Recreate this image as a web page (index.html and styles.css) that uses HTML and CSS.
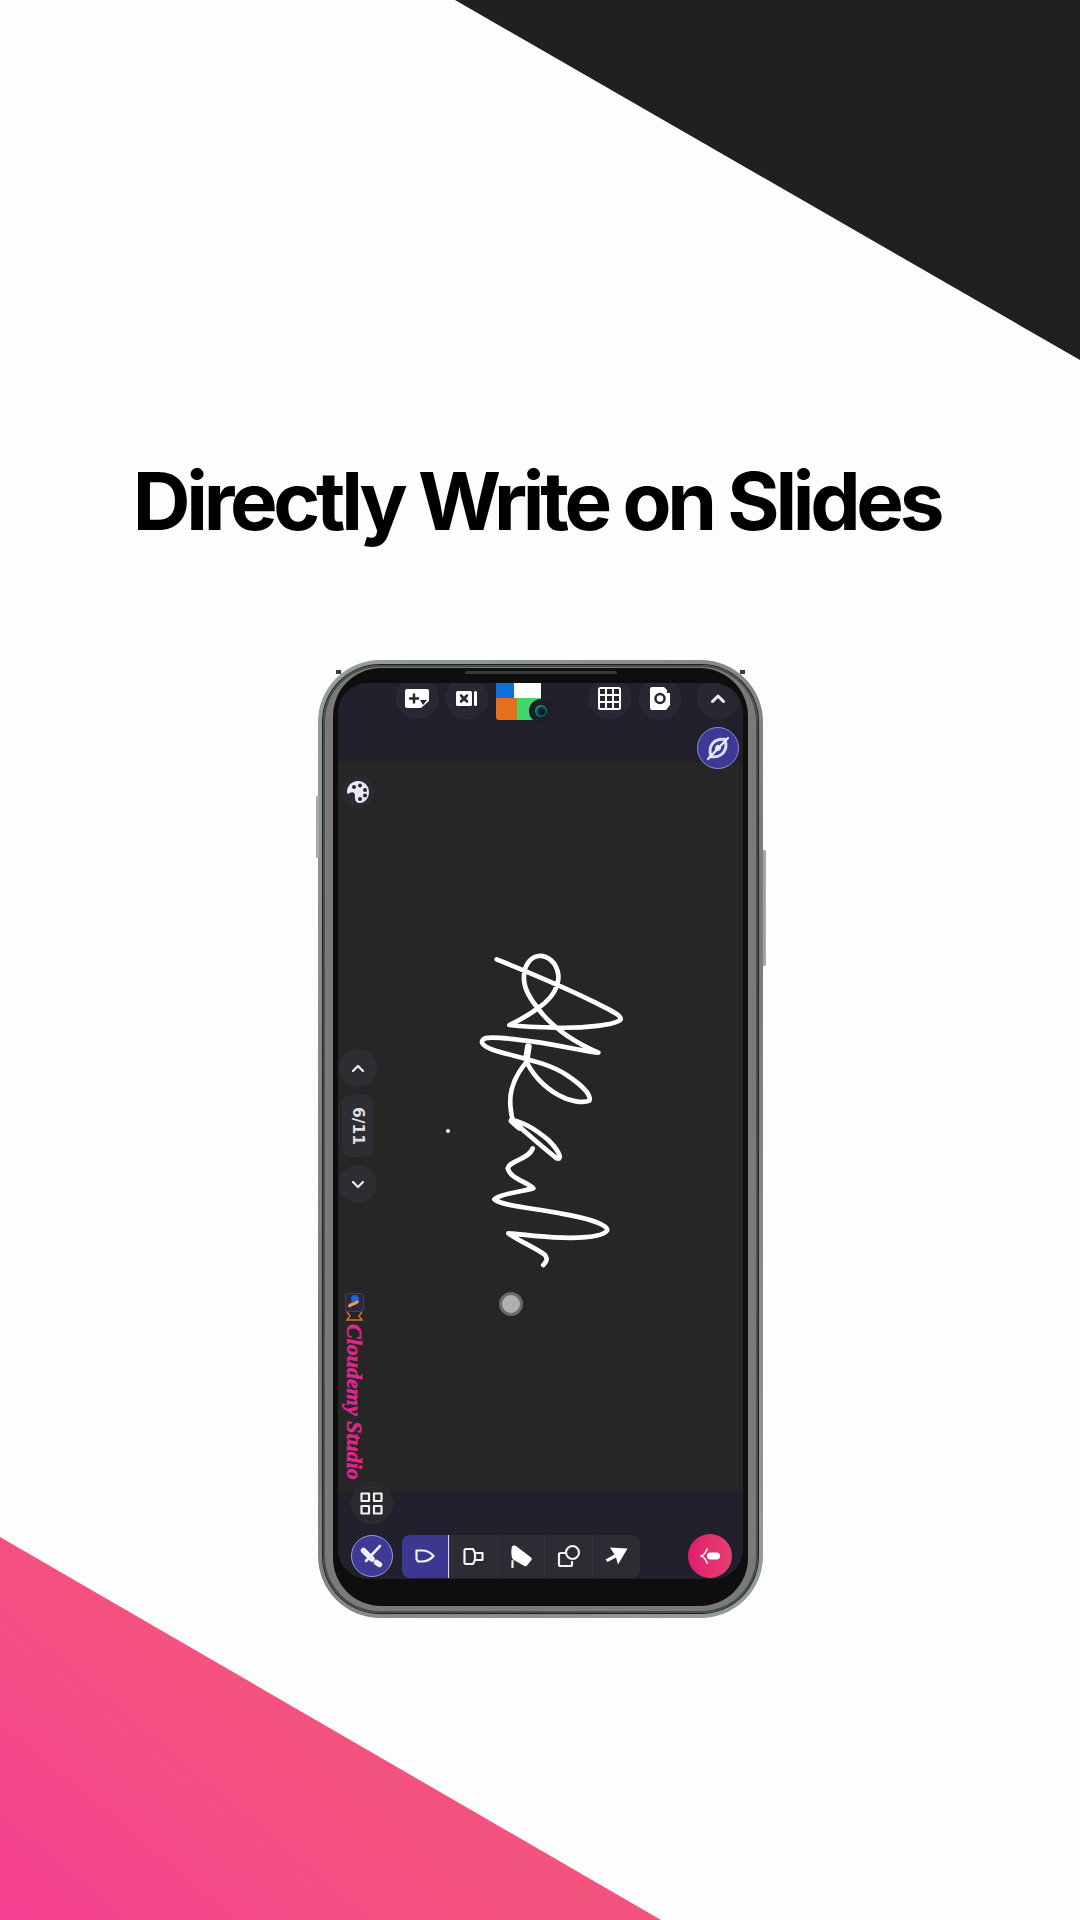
FILE: index.html
```html
<!DOCTYPE html>
<html lang="en">
<head>
<meta charset="utf-8">
<title>Directly Write on Slides</title>
<link rel="stylesheet" href="styles.css">
</head>
<body>
<div class="page">
  <div class="wedge wedge-top"></div>
  <div class="wedge wedge-bottom"></div>
  <h1 class="headline">Directly Write on Slides</h1>

  <div class="phone">
    <span class="ear ear-left"></span>
    <span class="ear ear-right"></span>
    <span class="side-btn side-btn-power"></span>
    <span class="side-btn side-btn-volume"></span>
    <div class="rim-dark">
      <div class="rim-metal">
        <div class="bezel">
          <span class="speaker"></span>
          <div class="screen">
            <header class="topbar">
              <div class="topbar-row">
                <div class="round">
                  <svg width="24" height="19" viewBox="0 0 24 19"><path class="fill-white" d="M2 0H22a2 2 0 0 1 2 2V12L16 19H2a2 2 0 0 1-2-2V2a2 2 0 0 1 2-2z"/><path class="stroke-dark" d="M5 9.500H13M9 5.500V13.500"/><path class="fill-dark" d="M15 11H22L18 16z"/></svg>
                </div>
                <div class="round">
                  <svg width="22" height="15" viewBox="0 0 22 15"><rect class="fill-white" x="0" y="0" width="16" height="15" rx="1.500"/><rect class="fill-white" x="18" y="0" width="3" height="15" rx="1.500"/><path class="stroke-dark" d="M5 4.500L11 10.500M11 4.500L5 10.500"/></svg>
                </div>
                <div class="swatch">
                  <span class="swatch-cell swatch-blue"></span>
                  <span class="swatch-cell swatch-white"></span>
                  <span class="swatch-cell swatch-orange"></span>
                  <span class="swatch-cell swatch-green"></span>
                  <span class="camera"><span class="camera-lens"></span></span>
                </div>
                <div class="round round-grid">
                  <svg width="23" height="23" viewBox="0 0 23 23"><rect class="fill-white" width="23" height="23" rx="2.500"/><path class="fill-dark" d="M2 2h5v5H2zM9 2h5v5H9zM16 2h5v5h-5zM2 9h5v5H2zM9 9h5v5H9zM16 9h5v5h-5zM2 16h5v5H2zM9 16h5v5H9zM16 16h5v5h-5z"/></svg>
                </div>
                <div class="round">
                  <svg width="20" height="23" viewBox="0 0 20 23"><path class="fill-white" d="M2 0H14L17 3V6H20V18L16 23H2a2 2 0 0 1-2-2V2a2 2 0 0 1 2-2z"/><circle cx="10" cy="11.500" r="4.500" class="ring-dark"/></svg>
                </div>
                <div class="round round-end">
                  <svg width="14" height="9" viewBox="0 0 14 9"><path class="stroke-white" d="M1.500 7.500L7 2L12.500 7.500"/></svg>
                </div>
              </div>
              <div class="eye-btn">
                <svg width="28" height="28" viewBox="0 0 28 28"><g transform="rotate(-52 14 14)"><path class="eye-line" d="M3 14C6 9 10 7 14 7s8 2 11 7c-3 5-7 7-11 7S6 19 3 14z"/><circle cx="14" cy="14" r="3" class="eye-pupil"/></g><path class="eye-slash" d="M4 25L24 4"/></svg>
              </div>
            </header>

            <main class="canvas">
              <svg class="signature" width="180" height="360" viewBox="0 0 540 1080">
                <path class="ink" d="M110 88C200 125 300 165 400 215C450 240 485 255 482 268C470 285 370 295 290 293C240 292 190 290 148 285C180 270 215 250 240 230C275 205 298 170 295 135C290 95 260 75 235 78C205 82 190 115 192 150C195 190 225 225 250 255C290 300 350 340 415 368C370 365 300 345 220 335C170 328 100 318 75 325C55 335 70 350 100 360C170 382 260 395 320 435C365 465 395 495 388 512C370 520 330 515 295 495C250 470 215 430 200 395C170 430 145 480 152 535C153 550 155 560 160 575C190 600 245 650 290 685C310 690 295 660 265 630C235 605 190 575 155 570"/>
                <path class="ink" d="M218 655C205 690 150 690 143 715C150 745 200 755 220 775C190 785 120 790 103 808C130 830 230 835 300 850C370 862 440 880 442 900C430 925 340 925 280 922C230 920 180 912 145 910C180 935 230 955 255 975C265 990 258 995 250 1005"/>
                <path class="ink ink-blob" d="M205 350L200 382"/>
                <path class="ink ink-blob" d="M156 572L178 592"/>
              </svg>
              <span class="ink-dot"></span>
              <span class="touch-dot"></span>

              <aside class="rail">
                <div class="palette">
                  <svg width="24" height="24" viewBox="0 0 24 24"><path class="fill-soft" d="M12 1C5.500 1 1 6 1 12c0 1.500 1 2 2 1.500C5 12.500 7 11.500 8.500 13.500c1 1.500 0 3 .5 5C9.500 21.500 11 23 13.500 23 19 23 23 18 23 12S18.500 1 12 1z"/><circle class="fill-dark" cx="8" cy="7" r="2"/><circle class="fill-dark" cx="14" cy="5.500" r="2"/><circle class="fill-dark" cx="19" cy="10" r="2"/><circle class="fill-dark" cx="19" cy="15.500" r="2"/><circle class="fill-dark" cx="14" cy="19" r="2"/></svg>
                </div>
                <div class="pager">
                  <div class="pager-btn"><svg width="14" height="9" viewBox="0 0 14 9"><path class="stroke-white-thin" d="M2 7L7 2L12 7"/></svg></div>
                  <div class="pager-count">6/11</div>
                  <div class="pager-btn"><svg width="14" height="9" viewBox="0 0 14 9"><path class="stroke-white-thin" d="M2 2L7 7L12 2"/></svg></div>
                </div>
                <div class="brand">
                  <svg width="19" height="28" viewBox="0 0 19 28"><rect class="logo-box" x="0.500" y="0.500" width="18" height="18" rx="2"/><circle cx="10" cy="6" r="4" class="logo-blue"/><path class="logo-stroke" d="M4 14C6 9 10 13 13 8"/><path class="logo-stand" d="M2 19L5 23L2 27H17L14 23L17 19"/></svg>
                  <div class="brand-name">Cloudemy Studio</div>
                </div>
              </aside>
            </main>

            <footer class="bottombar">
              <div class="round round-apps">
                <svg width="23" height="23" viewBox="0 0 23 23"><path class="outline-white" d="M1.500 1.500H9V9H1.500zM14 1.500H21.500V9H14zM1.500 14H9V21.500H1.500zM14 14H21.500V21.500H14z"/></svg>
              </div>
              <div class="tools-row">
                <div class="tool-toggle">
                  <svg width="24" height="24" viewBox="0 0 24 24"><path class="stroke-white-mid" d="M20 2L6 17"/><path class="stroke-white-wide" d="M3.500 6.500L12 15"/><path class="stroke-white-wide" d="M16.500 18.500L19.500 20.500"/></svg>
                </div>
                <div class="toolbar">
                  <div class="tool tool-active">
                    <svg width="20" height="14" viewBox="0 0 20 14"><path class="outline-white" d="M1.500 1.500H7C12 1.500 16 4 18.500 7C16 10 12 12.500 7 12.500H3L1.500 10z"/></svg>
                  </div>
                  <div class="tool">
                    <svg width="21" height="17" viewBox="0 0 21 17"><path class="outline-white" d="M3 1H10L12 5H19.500V12H12L10 16H3a1.500 1.500 0 0 1-1.500-1.500V2.500A1.500 1.500 0 0 1 3 1z"/><path class="outline-white" d="M12 5V12"/></svg>
                  </div>
                  <div class="tool">
                    <svg width="22" height="23" viewBox="0 0 22 23"><path class="fill-white" d="M2 1.500C3 .5 5 0 6 1L21 12.500C22 13.500 22 14.500 21 15.500L17 20.500C16 21.500 14.500 21.500 13.500 20.500L3 14.500C1 12 1 5 2 1.500z"/><path class="stroke-white-thin" d="M2.500 16V23"/></svg>
                  </div>
                  <div class="tool">
                    <svg width="24" height="24" viewBox="0 0 24 24"><path class="outline-white" d="M8 9H3.500A1.500 1.500 0 0 0 2 10.500V20.500A1.500 1.500 0 0 0 3.500 22H13.500A1.500 1.500 0 0 0 15 20.500V17"/><circle class="outline-white" cx="15.500" cy="8.500" r="6.500"/></svg>
                  </div>
                  <div class="tool">
                    <svg width="23" height="18" viewBox="0 0 23 18"><path class="fill-white" d="M5 0.500L22.500 1.500L13 17.500L11 10.500L2.500 15L0.500 12.500L9.500 7.500z"/></svg>
                  </div>
                </div>
                <div class="record">
                  <svg width="20" height="16" viewBox="0 0 20 16"><rect class="fill-white" x="7" y="4.500" width="13" height="7" rx="3.500"/><path class="stroke-white-hair" d="M7 1C6 4 5 7 1 8C5 9 6 12 7 15"/></svg>
                </div>
              </div>
            </footer>
          </div>
        </div>
      </div>
    </div>
  </div>
</div>
</body>
</html>
```
FILE: styles.css
```css
* { box-sizing: border-box; }
html, body { margin: 0; padding: 0; }
body { background: #fff; font-family: "Inter", "Liberation Sans", sans-serif; }

.page { position: relative; width: 1080px; height: 1920px; overflow: hidden; background: #fdfdfd; display: flex; flex-direction: column; align-items: center; }

.wedge { position: absolute; }
.wedge-top { top: 0; right: 0; width: 625px; height: 360px; background: #202020; clip-path: polygon(0 0, 100% 0, 100% 100%); }
.wedge-bottom { left: 0; bottom: 0; width: 661px; height: 383px; background: linear-gradient(40deg, #f54092 0%, #f4527f 45%, #f4567b 100%); clip-path: polygon(0 0, 100% 100%, 0 100%); }

.headline { position: relative; margin: 452px 7px 0 0; font-size: 80px; line-height: 97px; font-weight: 700; letter-spacing: -4.3px; color: #000; white-space: nowrap; }

.phone { position: relative; margin-top: 111px; width: 445px; height: 958px; padding: 4px; border-radius: 62px; background: linear-gradient(135deg, #94a19d, #737b79 50%, #93a09b); }
.rim-dark { height: 100%; padding: 1px; border-radius: 58px; background: #1f1f1f; }
.rim-metal { height: 100%; padding: 3px 10px 7px 10px; border-radius: 57px; background: #7a7a7a; box-shadow: inset 0 0 0 2px #4e4e4e; }
.bezel { position: relative; height: 100%; padding: 15px 5px 27px 5px; border-radius: 48px; background: #0e0e0e; }
.speaker { position: absolute; top: 3px; left: 132px; width: 152px; height: 3px; background: #3a3a3a; border-radius: 2px; }
.ear { position: absolute; top: 10px; width: 5px; height: 4px; background: #3a3a3a; }
.ear-left { left: 18px; }
.ear-right { right: 18px; }
.side-btn { position: absolute; width: 3px; background: #a0a7a4; border-radius: 1px; }
.side-btn-power { right: -3px; top: 190px; height: 116px; }
.side-btn-volume { left: -2px; top: 136px; height: 62px; background: #a6aba9; }

.screen { height: 100%; border-radius: 30px; overflow: hidden; display: flex; flex-direction: column; background: #22202c; }

.topbar { position: relative; z-index: 1; flex: 0 0 79px; min-height: 0; display: flex; flex-direction: column; background: #22202c; }
.topbar-row { flex: none; display: flex; align-items: flex-start; gap: 8px; margin-top: -6px; padding-left: 58px; height: 42px; }
.round { width: 42px; height: 42px; flex: none; display: flex; align-items: center; justify-content: center; border-radius: 50%; background: #292733; border: 1px solid #2f2d39; }
.round-grid { margin-left: 40px; }
.round-end { margin-left: 8px; }
.swatch { position: relative; flex: none; width: 45px; height: 37px; margin-top: 6px; display: grid; grid-template-columns: 18px 27px; grid-template-rows: 15px 22px; border-bottom-left-radius: 3px; }
.swatch-cell { display: block; }
.swatch-blue { background: #0f6fdf; }
.swatch-white { background: #fff; }
.swatch-orange { background: #e3701d; border-bottom-left-radius: 3px; margin-right: -3px; }
.swatch-green { background: #41d56c; margin-left: 3px; }
.camera { position: absolute; left: 33px; top: 16px; width: 24px; height: 24px; border-radius: 50%; background: #1c2024; display: flex; align-items: center; justify-content: center; }
.camera-lens { width: 12px; height: 12px; border-radius: 50%; background: radial-gradient(circle at 55% 55%, #062027 30%, #2a8f9f 70%, #0d3e48 100%); }
.eye-btn { flex: none; align-self: flex-end; width: 42px; height: 42px; margin: 8px 4px 0 0; display: flex; align-items: center; justify-content: center; border-radius: 50%; background: #3c3a94; border: 1.500px solid #8d8ad8; }
.eye-line { fill: none; stroke: #dcdbf5; stroke-width: 3; }
.eye-pupil { fill: #dcdbf5; }
.eye-slash { fill: none; stroke: #eeeeff; stroke-width: 2.200; stroke-linecap: round; }

.canvas { position: relative; flex: 0 0 730px; background: #262626; }
.signature { position: absolute; left: 122px; top: 168px; }
.ink { fill: none; stroke: #fff; stroke-width: 14; stroke-linecap: round; stroke-linejoin: round; }
.ink-blob { stroke-width: 20; }
.ink-dot { position: absolute; left: 108px; top: 367px; width: 4px; height: 4px; border-radius: 50%; background: #fff; }
.touch-dot { position: absolute; left: 161px; top: 530px; width: 24px; height: 24px; border-radius: 50%; background: #b0b0b0; border: 3px solid #6a6a6a; }

.rail { display: flex; flex-direction: column; align-items: center; width: 40px; }
.palette { margin-top: 14px; width: 32px; height: 32px; display: flex; align-items: center; justify-content: center; border-radius: 50%; background: #2b2a33; }
.pager { margin-top: 241px; display: flex; flex-direction: column; align-items: center; gap: 8px; }
.pager-btn { width: 38px; height: 38px; display: flex; align-items: center; justify-content: center; border-radius: 50%; background: #2e2d33; }
.pager-count { width: 31px; height: 62px; display: flex; align-items: center; justify-content: center; writing-mode: vertical-rl; border-radius: 8px; background: #2e2d33; color: #dedede; font-family: "DejaVu Sans", sans-serif; font-size: 15.500px; font-weight: 700; }
.brand { margin-top: 90px; margin-right: 7px; display: flex; flex-direction: column; align-items: center; gap: 3px; }
.brand-name { writing-mode: vertical-rl; font-family: "Liberation Serif", serif; font-style: italic; font-weight: 700; font-size: 22px; line-height: 22px; color: #e0268c; white-space: nowrap; -webkit-text-stroke: 0.500px #e0268c; }
.logo-box { fill: #2c2640; stroke: #4a3a66; }
.logo-blue { fill: #1668d8; }
.logo-stroke { fill: none; stroke: #f2a13a; stroke-width: 3; }
.logo-stand { fill: none; stroke: #d8702a; stroke-width: 1.500; }

.bottombar { flex: 0 0 87px; min-height: 0; position: relative; display: flex; flex-direction: column; padding: 0 11px 0 13px; background: #22202c; }
.round-apps { margin-top: -10px; background: #2a2a2e; border-color: #2f2f34; }
.tools-row { display: flex; align-items: center; margin-top: 10px; }
.tool-toggle { flex: none; width: 42px; height: 42px; display: flex; align-items: center; justify-content: center; border-radius: 50%; background: #3c3a94; border: 1.500px solid #9a97e0; }
.toolbar { flex: none; margin-left: 9px; width: 238px; height: 43px; display: flex; border-radius: 8px; overflow: hidden; background: #2d2c35; }
.tool { flex: 1; display: flex; align-items: center; justify-content: center; border-left: 1px solid #35343d; }
.tool:first-child { border-left: 0; }
.tool-active { background: #3b3890; border-left: 1.500px solid #d8d8f0; border-right: 1.500px solid #d8d8f0; border-radius: 6px 0 0 6px; }
.record { flex: none; width: 44px; height: 44px; margin-left: auto; display: flex; align-items: center; justify-content: center; border-radius: 50%; background: linear-gradient(90deg, #e01f6e, #e6406f); }

.fill-white { fill: #fff; }
.fill-soft { fill: #ece8f0; }
.fill-dark { fill: #27252f; }
.stroke-dark { fill: none; stroke: #27252f; stroke-width: 2.500; stroke-linecap: round; }
.ring-dark { fill: none; stroke: #27252f; stroke-width: 2.500; }
.stroke-white { fill: none; stroke: #eeeef6; stroke-width: 3; stroke-linecap: round; stroke-linejoin: round; }
.stroke-white-wide { fill: none; stroke: #eeeef6; stroke-width: 5.500; stroke-linecap: round; }
.stroke-white-mid { fill: none; stroke: #eeeef6; stroke-width: 2.600; stroke-linecap: round; }
.stroke-white-thin { fill: none; stroke: #f0f0f0; stroke-width: 2.200; stroke-linecap: round; stroke-linejoin: round; }
.stroke-white-hair { fill: none; stroke: #f6f6f6; stroke-width: 1.600; stroke-linecap: round; stroke-linejoin: round; }
.outline-white { fill: none; stroke: #f2f2f2; stroke-width: 2.200; stroke-linejoin: round; }
```
